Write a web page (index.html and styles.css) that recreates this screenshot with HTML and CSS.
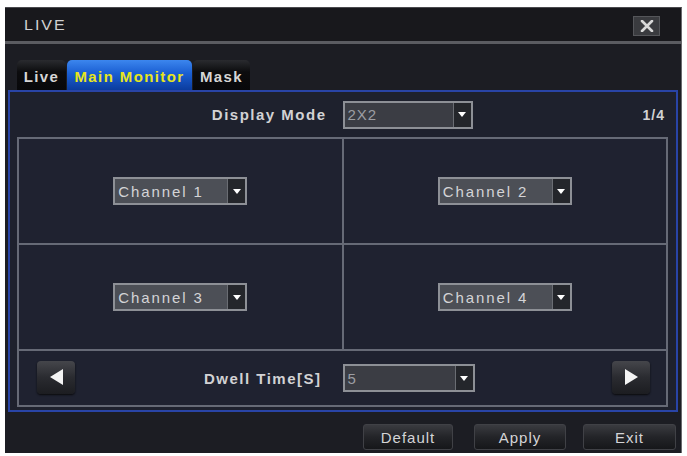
FILE: index.html
```html
<!DOCTYPE html>
<html>
<head>
<meta charset="utf-8">
<link rel="stylesheet" href="styles.css">
</head>
<body>
<div class="screen">
  <div class="titlebar">
    <span class="title">LIVE</span>
    <span class="close"><svg width="14" height="12" viewBox="0 0 14 12"><path d="M2 1 L12 11 M12 1 L2 11" stroke="#d8d8d8" stroke-width="2.6" stroke-linecap="round"/></svg></span>
  </div>
  <div class="tabs">
    <div class="tab tab-live">Live</div>
    <div class="tab tab-active">Main Monitor</div>
    <div class="tab tab-mask">Mask</div>
  </div>
  <div class="panel">
    <div class="header">
      <div class="hcell hleft"><span class="label">Display Mode</span></div>
      <div class="hcell hright">
        <div class="dd dd-dark dd-mode"><span class="dd-text">2X2</span><span class="dd-btn"><i class="tri-down"></i></span></div>
        <span class="page">1/4</span>
      </div>
    </div>
    <div class="grid">
      <div class="cell"><div class="dd dd-ch"><span class="dd-text">Channel 1</span><span class="dd-btn"><i class="tri-down"></i></span></div></div>
      <div class="cell"><div class="dd dd-ch"><span class="dd-text">Channel 2</span><span class="dd-btn"><i class="tri-down"></i></span></div></div>
      <div class="cell"><div class="dd dd-ch"><span class="dd-text">Channel 3</span><span class="dd-btn"><i class="tri-down"></i></span></div></div>
      <div class="cell"><div class="dd dd-ch"><span class="dd-text">Channel 4</span><span class="dd-btn"><i class="tri-down"></i></span></div></div>
      <div class="dwell">
        <div class="dwell-left">
          <span class="arrow-btn"><i class="tri-left"></i></span>
          <span class="label">Dwell Time[S]</span>
        </div>
        <div class="dwell-right">
          <div class="dd dd-dark dd-dwell"><span class="dd-text">5</span><span class="dd-btn"><i class="tri-down"></i></span></div>
          <span class="arrow-btn"><i class="tri-right"></i></span>
        </div>
      </div>
    </div>
  </div>
  <div class="buttons">
    <span class="btn btn-default">Default</span>
    <span class="btn btn-apply">Apply</span>
    <span class="btn btn-exit">Exit</span>
  </div>
</div>
</body>
</html>
```
FILE: styles.css
```css
html, body { margin: 0; padding: 0; background: #ffffff; }
body { font-family: "Liberation Sans", Arial, sans-serif; }

.screen {
  margin: 7px 4px 3px 5px;
  width: 677px;
  height: 446px;
  background: #1c1d23;
  box-sizing: border-box;
  display: flex;
  flex-direction: column;
  border-right: 1px solid #6a6a6e;
  border-top: 1px solid #4a4a4e;
}

.titlebar {
  height: 33px;
  background: #18181c;
  border-bottom: 3px solid #5b5c61;
  display: flex;
  align-items: center;
  padding-left: 19px;
  padding-right: 21px;
  flex-shrink: 0;
}
.title {
  color: #d0d0d2;
  font-size: 16px;
  letter-spacing: 2px;
  flex: 1;
  transform: scaleY(0.95);
}
.close {
  width: 27px;
  height: 20px;
  box-sizing: border-box;
  background: #3a3b3f;
  border: 1px solid #55565a;
  display: flex;
  align-items: center;
  justify-content: center;
  margin-top: 2px;
}

.tabs {
  display: flex;
  gap: 1px;
  margin-top: 16px;
  padding-left: 12px;
  height: 30px;
  flex-shrink: 0;
}
.tab {
  height: 30px;
  box-sizing: border-box;
  border-radius: 5px 5px 0 0;
  background: linear-gradient(#2a2b2f, #0c0c0e 40%, #08080a);
  color: #d6d6d6;
  font-weight: bold;
  font-size: 15px;
  letter-spacing: 1.4px;
  display: flex;
  align-items: center;
  justify-content: center;
  padding-top: 2px;
}
.tab-live { width: 49px; }
.tab-active {
  width: 125px;
  background: linear-gradient(#3c86ee, #1a5ed2 45%, #0b3c9e);
  color: #e8e61c;
}
.tab-mask { width: 57px; }

.panel {
  margin-left: 3px;
  width: 670px;
  height: 322px;
  box-sizing: border-box;
  border: 2px solid #2944a6;
  background: #1e212d;
  padding: 0 8px 3px 7px;
  flex-shrink: 0;
}

.header {
  height: 45px;
  display: grid;
  grid-template-columns: 1fr 1fr;
  column-gap: 2px;
  padding: 0 2px;
}
.hcell { display: flex; align-items: center; }
.hleft { justify-content: flex-end; padding-right: 15px; }
.hright { justify-content: space-between; margin-left: -1px; }

.label {
  color: #d2d2d4;
  font-weight: bold;
  font-size: 15px;
  letter-spacing: 1.5px;
}
.page {
  color: #d2d2d4;
  font-weight: bold;
  font-size: 14px;
  letter-spacing: 1px;
  padding-right: 1px;
}

.grid {
  display: grid;
  grid-template-columns: 1fr 1fr;
  grid-template-rows: 104px 104px 54px;
  gap: 2px;
  padding: 2px;
  background: #666a76;
}
.cell {
  background: #1f2230;
  display: flex;
  align-items: center;
  justify-content: center;
}

.dd {
  display: flex;
  height: 28px;
  box-sizing: border-box;
  border: 2px solid #8d9096;
  background: #4c4f56;
}
.dd-text {
  flex: 1;
  color: #d4d4d6;
  font-size: 15px;
  letter-spacing: 1.9px;
  padding-left: 3px;
  display: flex;
  align-items: center;
}
.dd-btn {
  width: 17px;
  background: #24262b;
  border-left: 1px solid #6a6d73;
  display: flex;
  align-items: center;
  justify-content: center;
}
.tri-down {
  width: 0; height: 0;
  border-left: 4px solid transparent;
  border-right: 4px solid transparent;
  border-top: 5px solid #ffffff;
}
.dd-ch { width: 134px; }
.dd-dark { background: #3b3d44; }
.dd-dark .dd-text { color: #9c9ea3; letter-spacing: 1px; }
.dd-mode { width: 130px; }
.dd-dwell { width: 132px; }

.dwell {
  grid-column: 1 / 3;
  background: #1f2230;
  display: grid;
  grid-template-columns: 1fr 1fr;
  column-gap: 2px;
}
.dwell-left {
  display: flex;
  align-items: center;
  justify-content: space-between;
  padding-left: 18px;
  padding-right: 20px;
}
.dwell-right {
  display: flex;
  align-items: center;
  justify-content: space-between;
  padding-right: 16px;
  margin-left: -1px;
}

.arrow-btn {
  width: 38px;
  height: 33px;
  box-sizing: border-box;
  border-radius: 4px;
  background: linear-gradient(#45464b, #2a2b30 50%, #1c1d21);
  box-shadow: 0 1px 2px #0a0a0c;
  display: flex;
  align-items: center;
  justify-content: center;
  margin-top: -2px;
}
.tri-left {
  width: 0; height: 0;
  border-top: 8px solid transparent;
  border-bottom: 8px solid transparent;
  border-right: 13px solid #f4f4f4;
}
.tri-right {
  width: 0; height: 0;
  border-top: 8px solid transparent;
  border-bottom: 8px solid transparent;
  border-left: 13px solid #f4f4f4;
}

.buttons {
  display: flex;
  justify-content: flex-end;
  margin-top: 12px;
  padding-right: 5px;
  height: 26px;
}
.btn {
  height: 26px;
  box-sizing: border-box;
  border: 1px solid #404146;
  border-radius: 3px;
  background: linear-gradient(#3a3b40, #232428 50%, #16171a);
  color: #d4d4d6;
  font-size: 15px;
  letter-spacing: 1px;
  display: flex;
  align-items: center;
  justify-content: center;
}
.btn-default { width: 90px; }
.btn-apply { width: 92px; margin-left: 21px; }
.btn-exit { width: 93px; margin-left: 17px; }
```
